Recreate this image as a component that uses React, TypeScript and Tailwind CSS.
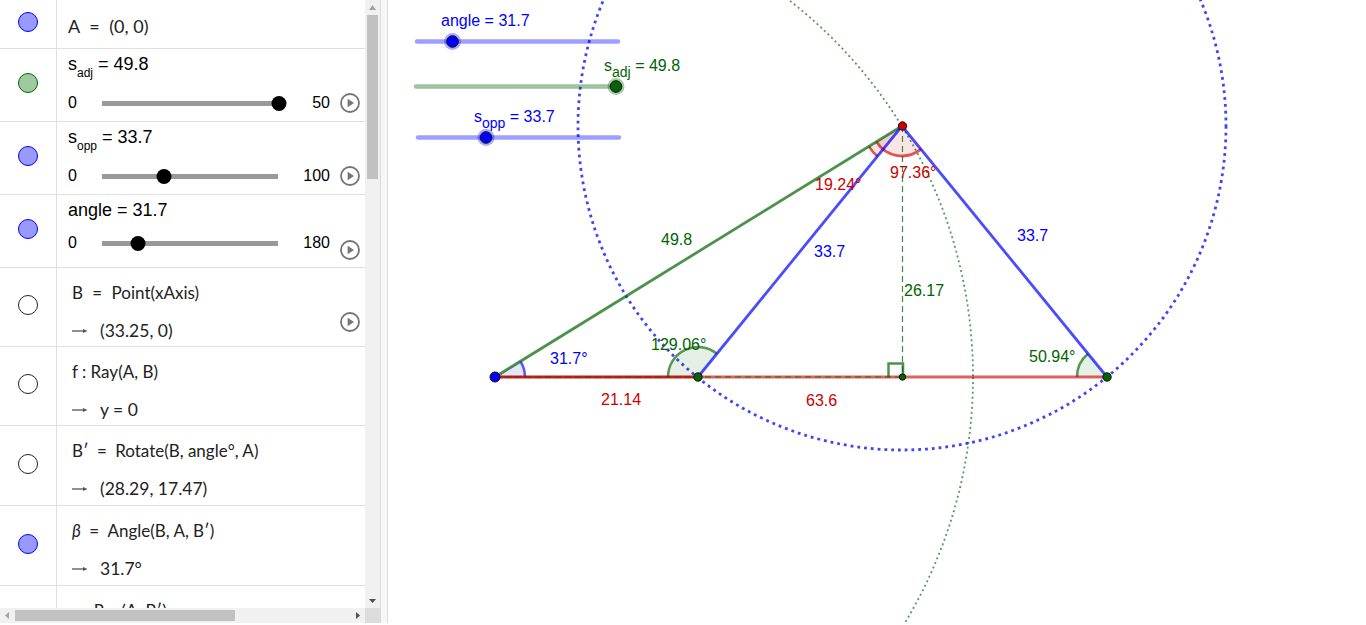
import React from 'react'

const LIST_FONT = { fontFamily: '"Lato", "Noto Sans", sans-serif' }

const Marble = ({ fill, ring }: { fill: string; ring: string }) => (
  <div className={`w-5 h-5 rounded-full border ${fill} ${ring}`} />
)

const PlayIcon = () => (
  <svg width="20" height="20" viewBox="0 0 20 20">
    <circle cx="10" cy="10" r="9" fill="none" stroke="#757575" strokeWidth="1.8" />
    <path d="M7.600 5.700 L14 10 L7.600 14.300 Z" fill="#757575" />
  </svg>
)

const Arrow = () => (
  <svg width="16" height="8" viewBox="0 0 16 8" className="shrink-0">
    <path d="M0 4 H12" stroke="#555" strokeWidth="1.3" />
    <path d="M11 2 L15.500 4 L11 6 Z" fill="#555" />
  </svg>
)

const SLIDERS = [
  { base: 's', sub: 'adj', value: '49.8', max: '50', thumb: 177, fill: 'bg-[#9fc99f]', ring: 'border-[#006400]', bar: 'mt-[9px]', play: '' },
  { base: 's', sub: 'opp', value: '33.7', max: '100', thumb: 62, fill: 'bg-[#9999ff]', ring: 'border-[#0000ff]', bar: 'mt-[9px]', play: '' },
  { base: 'angle', sub: '', value: '31.7', max: '180', thumb: 36, fill: 'bg-[#9999ff]', ring: 'border-[#0000ff]', bar: 'mt-[3px]', play: 'relative top-[7px]' },
]

const DEFS = [
  { h: 'h-[79px]', filled: false, def: <>B <span className="mx-[5px]">=</span> Point(xAxis)</>, out: '(33.25, 0)', play: true },
  { h: 'h-[79px]', filled: false, def: <>f : Ray(A, B)</>, out: 'y = 0', play: false },
  { h: 'h-[80px]', filled: false, def: <>B′ <span className="mx-1">=</span> Rotate(B, angle°, A)</>, out: '(28.29, 17.47)', play: false },
  { h: 'h-[80px]', filled: true, def: <><i>β</i> <span className="mx-1">=</span> Angle(B, A, B′)</>, out: '31.7°', play: false },
  { h: 'h-[80px]', filled: false, def: <>g : Ray(A, B′)</>, out: '', play: false },
]

const SliderRow = ({ s }: { s: (typeof SLIDERS)[number] }) => (
  <div className="h-[73px] flex border-b border-[#e0e0e0] font-['Liberation_Sans',sans-serif] text-black">
    <div className="w-[57px] shrink-0 flex items-center justify-center border-r border-[#e0e0e0] pb-[4px]">
      <Marble fill={s.fill} ring={s.ring} />
    </div>
    <div className="flex-1 pl-[11px] pr-[5px] flex flex-col">
      <div className="h-[33px] pt-[2px] text-[18px] leading-[26px] whitespace-nowrap">
        {s.base}
        {s.sub && <sub className="text-[12px] leading-none align-[-4px]">{s.sub}</sub>} = {s.value}
      </div>
      <div className={`flex items-center h-[24px] ${s.bar}`}>
        <span className="w-[34px] text-[16px]">0</span>
        <div className="relative w-[176px] h-[5px] bg-[#999999]">
          <div className="absolute top-[-5px] w-[15px] h-[15px] rounded-full bg-black -translate-x-1/2" style={{ left: s.thumb }} />
        </div>
        <span className="flex-1 text-right text-[16px] pr-[10px]">{s.max}</span>
        <div className={s.play}>
          <PlayIcon />
        </div>
      </div>
    </div>
  </div>
)

const AlgebraPanel = () => (
  <div className="w-[380px] h-full shrink-0 relative overflow-hidden bg-white">
    <div className="w-[365px] h-[608px] overflow-hidden">
      <div className="h-[49px] flex border-b border-[#e0e0e0]">
        <div className="w-[57px] shrink-0 flex items-center justify-center border-r border-[#e0e0e0] pb-[4px]">
          <Marble fill="bg-[#9999ff]" ring="border-[#0000ff]" />
        </div>
        <div className="pl-[11px] pt-[14px] text-[18px] leading-[24px] text-[#222] whitespace-nowrap" style={LIST_FONT}>
          A <span className="mx-[5px]">=</span> (0, 0)
        </div>
      </div>
      {SLIDERS.map((s) => (
        <SliderRow key={s.value} s={s} />
      ))}
      {DEFS.map((d, i) => (
        <div key={i} className={`${d.h} flex border-b border-[#e0e0e0] relative text-[17px] text-[#222]`} style={LIST_FONT}>
          <div className="w-[57px] shrink-0 flex items-center justify-center border-r border-[#e0e0e0] pb-[4px]">
            {d.filled ? <Marble fill="bg-[#9999ff]" ring="border-[#0000ff]" /> : <Marble fill="bg-white" ring="border-[#222]" />}
          </div>
          <div className="pl-[15px] flex flex-col">
            <div className="h-[26px] mt-[12px] leading-[26px] whitespace-nowrap">{d.def}</div>
            {d.out && (
              <div className="flex items-center gap-[12px] h-[26px] mt-[12px] text-[17.5px] leading-[26px] whitespace-nowrap">
                <Arrow />
                {d.out}
              </div>
            )}
          </div>
          {d.play && (
            <div className="absolute right-[5px] top-[44px]">
              <PlayIcon />
            </div>
          )}
        </div>
      ))}
    </div>
    {/* vertical scrollbar */}
    <div className="absolute top-0 right-0 w-[15px] h-[608px] bg-[#f1f1f1] flex flex-col items-center">
      <svg width="15" height="15" viewBox="0 0 15 15"><path d="M4 10 L7.500 5 L11 10 Z" fill="#a3a3a3" /></svg>
      <div className="w-[11px] h-[164px] bg-[#c1c1c1]" />
      <div className="flex-1" />
      <svg width="15" height="15" viewBox="0 0 15 15"><path d="M4 6 L7.500 10 L11 6 Z" fill="#505050" /></svg>
    </div>
    {/* horizontal scrollbar */}
    <div className="absolute left-0 bottom-0 w-[380px] h-[15px] bg-[#f1f1f1] flex items-center">
      <svg width="15" height="15" viewBox="0 0 15 15"><path d="M9 4 L5 7.500 L9 11 Z" fill="#a3a3a3" /></svg>
      <div className="w-[220px] h-[11px] bg-[#c1c1c1]" />
      <div className="w-[115px]" />
      <svg width="15" height="15" viewBox="0 0 15 15"><path d="M6 4 L10 7.500 L6 11 Z" fill="#505050" /></svg>
      <div className="w-[15px] h-full bg-[#dcdcdc]" />
    </div>
  </div>
)

const Label = ({ x, y, fill, children }: { x: number; y: number; fill: string; children: React.ReactNode }) => (
  <text x={x} y={y} fill={fill} fontSize="16" fontFamily="'Liberation Sans', sans-serif">{children}</text>
)

const BLUE = '#0000ff'
const GREEN = '#006400'
const RED = '#cc0000'

const Point = ({ x, y, r, fill }: { x: number; y: number; r: number; fill: string }) => (
  <circle cx={x} cy={y} r={r} fill={fill} stroke="#111" strokeWidth="1" />
)

const SliderHandle = ({ x, y, fill, halo }: { x: number; y: number; fill: string; halo: string }) => (
  <>
    <circle cx={x} cy={y} r="8.500" fill={halo} />
    <Point x={x} y={y} r={5.800} fill={fill} />
  </>
)

// coordinates below are relative to the page, the svg starts at x=388
const Construction = () => (
  <svg className="block w-full h-full" viewBox="388 0 978 623">
    {/* circles */}
    <circle cx="495" cy="377" r="478" fill="none" stroke="#006400" strokeOpacity="0.65" strokeWidth="1.800" strokeDasharray="2 3" />
    <circle cx="902" cy="126" r="324" fill="none" stroke="#2222ee" strokeOpacity="0.85" strokeWidth="2.800" strokeDasharray="2.800 4" />

    {/* angle sectors */}
    <path d="M495 377 L525 377 A30 30 0 0 0 520.500 361.300 Z" fill="#0000ff" fillOpacity="0.1" />
    <path d="M525 377 A30 30 0 0 0 520.500 361.300" fill="none" stroke={BLUE} strokeOpacity="0.65" strokeWidth="2.500" />
    <path d="M698 377 L668 377 A30 30 0 0 1 717 353.700 Z" fill="#006400" fillOpacity="0.1" />
    <path d="M668 377 A30 30 0 0 1 717 353.700" fill="none" stroke={GREEN} strokeOpacity="0.65" strokeWidth="2.500" />
    <path d="M1107 377 L1077 377 A30 30 0 0 1 1088 353.700 Z" fill="#006400" fillOpacity="0.1" />
    <path d="M1077 377 A30 30 0 0 1 1088 353.700" fill="none" stroke={GREEN} strokeOpacity="0.65" strokeWidth="2.500" />
    <path d="M902 126 L869 146.500 A39 39 0 0 0 877.400 156.300 Z" fill="#cc0000" fillOpacity="0.1" />
    <path d="M869 146.500 A39 39 0 0 0 877.400 156.300" fill="none" stroke={RED} strokeOpacity="0.65" strokeWidth="2.500" />
    <path d="M902 126 L876.500 141.700 A30 30 0 0 0 921 149.200 Z" fill="#cc0000" fillOpacity="0.1" />
    <path d="M876.500 141.700 A30 30 0 0 0 921 149.200" fill="none" stroke={RED} strokeOpacity="0.65" strokeWidth="2.800" />

    {/* segments */}
    <path d="M698 377 H1107" stroke={RED} strokeOpacity="0.62" strokeWidth="2.800" />
    <path d="M495 377 H698" stroke={RED} strokeOpacity="0.9" strokeWidth="2.800" />
    <path d="M902.500 126 V377" stroke={GREEN} strokeOpacity="0.75" strokeWidth="1.200" strokeDasharray="6 4" />
    <path d="M495 377 H902" stroke={GREEN} strokeOpacity="0.75" strokeWidth="1.200" strokeDasharray="6 4" />
    <path d="M495 377 L902 126" stroke={GREEN} strokeOpacity="0.7" strokeWidth="2.800" />
    <path d="M698 377 L902 126 L1107 377" fill="none" stroke={BLUE} strokeOpacity="0.7" strokeWidth="2.800" />
    <path d="M888.500 377 V363.500 H903 V377" fill="none" stroke={GREEN} strokeOpacity="0.7" strokeWidth="2.500" />

    {/* sliders */}
    <path d="M417 41.500 H618" stroke={BLUE} strokeOpacity="0.38" strokeWidth="4.500" strokeLinecap="round" />
    <path d="M416 86.500 H616" stroke={GREEN} strokeOpacity="0.38" strokeWidth="4.500" strokeLinecap="round" />
    <path d="M418 137.500 H619" stroke={BLUE} strokeOpacity="0.38" strokeWidth="4.500" strokeLinecap="round" />
    <SliderHandle x={452.500} y={41.500} fill={BLUE} halo="#0000ff55" />
    <SliderHandle x={616} y={86.500} fill={GREEN} halo="#00640055" />
    <SliderHandle x={486} y={137.500} fill={BLUE} halo="#0000ff55" />

    {/* points */}
    <Point x={495} y={377} r={5} fill={BLUE} />
    <Point x={698} y={377} r={4.200} fill={GREEN} />
    <Point x={1107} y={377} r={4.200} fill={GREEN} />
    <Point x={902.500} y={377} r={3.200} fill={GREEN} />
    <Point x={902.500} y={126} r={4.200} fill={RED} />

    {/* labels */}
    <Label x={441} y={26} fill={BLUE}>angle = 31.7</Label>
    <text x={604} y={71} fill={GREEN} fontSize="16" fontFamily="'Liberation Sans', sans-serif">s<tspan dy="6" fontSize="14">adj</tspan><tspan dy="-6"> = 49.8</tspan></text>
    <text x={474} y={122} fill={BLUE} fontSize="16" fontFamily="'Liberation Sans', sans-serif">s<tspan dy="6" fontSize="14">opp</tspan><tspan dy="-6"> = 33.7</tspan></text>
    <Label x={661} y={245} fill={GREEN}>49.8</Label>
    <Label x={550} y={364} fill={BLUE}>31.7°</Label>
    <Label x={601} y={405} fill={RED}>21.14</Label>
    <Label x={651} y={350} fill={GREEN}>129.06°</Label>
    <Label x={806} y={406} fill={RED}>63.6</Label>
    <Label x={814} y={257} fill={BLUE}>33.7</Label>
    <Label x={1017} y={241} fill={BLUE}>33.7</Label>
    <Label x={904} y={296} fill={GREEN}>26.17</Label>
    <Label x={1029} y={362} fill={GREEN}>50.94°</Label>
    <Label x={815} y={190} fill={RED}>19.24°</Label>
    <Label x={890} y={178} fill={RED}>97.36°</Label>
  </svg>
)

export default function App() {
  return (
    <div className="w-[1366px] h-[623px] flex overflow-hidden bg-white">
      <AlgebraPanel />
      <div className="w-[8px] shrink-0 bg-[#f7f7f7] border-x border-[#dcdcdc]" />
      <div className="flex-1 min-w-0 h-full">
        <Construction />
      </div>
    </div>
  )
}
